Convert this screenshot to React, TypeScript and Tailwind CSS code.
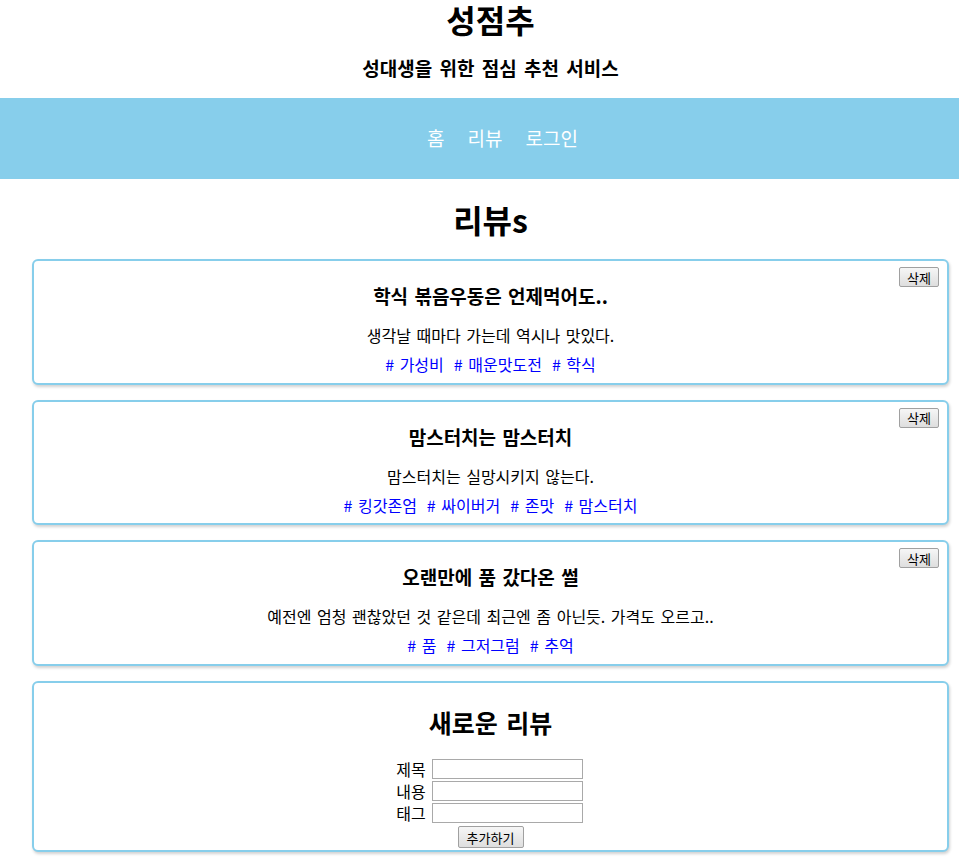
import React from "react";

const FONT = { fontFamily: '"Noto Sans CJK KR", "Noto Sans", sans-serif' };

type Review = { title: string; body: string; tags: string[] };

const REVIEWS: Review[] = [
  { title: "학식 볶음우동은 언제먹어도..", body: "생각날 때마다 가는데 역시나 맛있다.", tags: ["가성비", "매운맛도전", "학식"] },
  { title: "맘스터치는 맘스터치", body: "맘스터치는 실망시키지 않는다.", tags: ["킹갓존엄", "싸이버거", "존맛", "맘스터치"] },
  { title: "오랜만에 품 갔다온 썰", body: "예전엔 엄청 괜찮았던 것 같은데 최근엔 좀 아닌듯. 가격도 오르고..", tags: ["품", "그저그럼", "추억"] },
];

const card =
  "relative mx-[10px] border-2 border-[#87ceeb] rounded-[6px] bg-white shadow-[1px_2px_3px_rgba(0,0,0,0.18)] text-center";

const btn =
  "border border-[#a0a0a0] bg-gradient-to-b from-[#f6f6f6] to-[#dedede] text-[13px] leading-none text-black rounded-[2px]";

function ReviewCard({ r }: { r: Review }) {
  return (
    <div className={`${card} pt-[22px] pb-[6.5px]`}>
      <button className={`${btn} absolute top-[6px] right-[8px] w-[40px] h-[20px]`}>삭제</button>
      <h3 className="text-[19px] font-bold leading-[26px] [word-spacing:2px]">{r.title}</h3>
      <p className="mt-[14px] text-[16px] leading-[24px] [word-spacing:2px]">{r.body}</p>
      <div className="mt-[5px] flex justify-center gap-[10px] text-[16px] leading-[24px] text-[#0000ff] [word-spacing:2px]">
        {r.tags.map((t) => (
          <span key={t}># {t}</span>
        ))}
      </div>
    </div>
  );
}

function Field({ label }: { label: string }) {
  return (
    <div className="flex items-center justify-center h-[22px] gap-[6px] pr-[2px]">
      <span className="text-[16px] leading-[20px] [word-spacing:2px]">{label}</span>
      <input className="w-[151px] h-[20px] border border-[#a9a9a9] bg-white" />
    </div>
  );
}

export default function App() {
  return (
    <div className="min-h-screen bg-white text-black pb-[14px]" style={FONT}>
      <header className="text-center pl-[22px] pt-[2px]">
        <h1 className="text-[32px] font-bold leading-[34px]">성점추</h1>
        <h2 className="mt-[20px] text-[19px] font-bold leading-[24px] [word-spacing:3px]">성대생을 위한 점심 추천 서비스</h2>
      </header>
      <nav className="mt-[18px] h-[81px] bg-[#87ceeb] flex items-center justify-center gap-[23px] pl-[46px] text-white text-[19px]">
        <span>홈</span>
        <span>리뷰</span>
        <span>로그인</span>
      </nav>
      <div className="pl-[22px]">
        <h2 className="mt-[20px] text-center text-[32px] font-bold leading-[40px]">리뷰s</h2>
        <div className="mt-[20px] flex flex-col gap-[15px]">
          {REVIEWS.map((r) => (
            <ReviewCard key={r.title} r={r} />
          ))}
          <div className={`${card} pt-[23px] pb-[2px]`}>
            <h3 className="text-[25px] font-bold leading-[32px] [word-spacing:3px]">새로운 리뷰</h3>
            <div className="mt-[20px] flex flex-col">
              <Field label="제목" />
              <Field label="내용" />
              <Field label="태그" />
            </div>
            <button className={`${btn} mt-[-2px] w-[66px] h-[22px]`}>추가하기</button>
          </div>
        </div>
      </div>
    </div>
  );
}
